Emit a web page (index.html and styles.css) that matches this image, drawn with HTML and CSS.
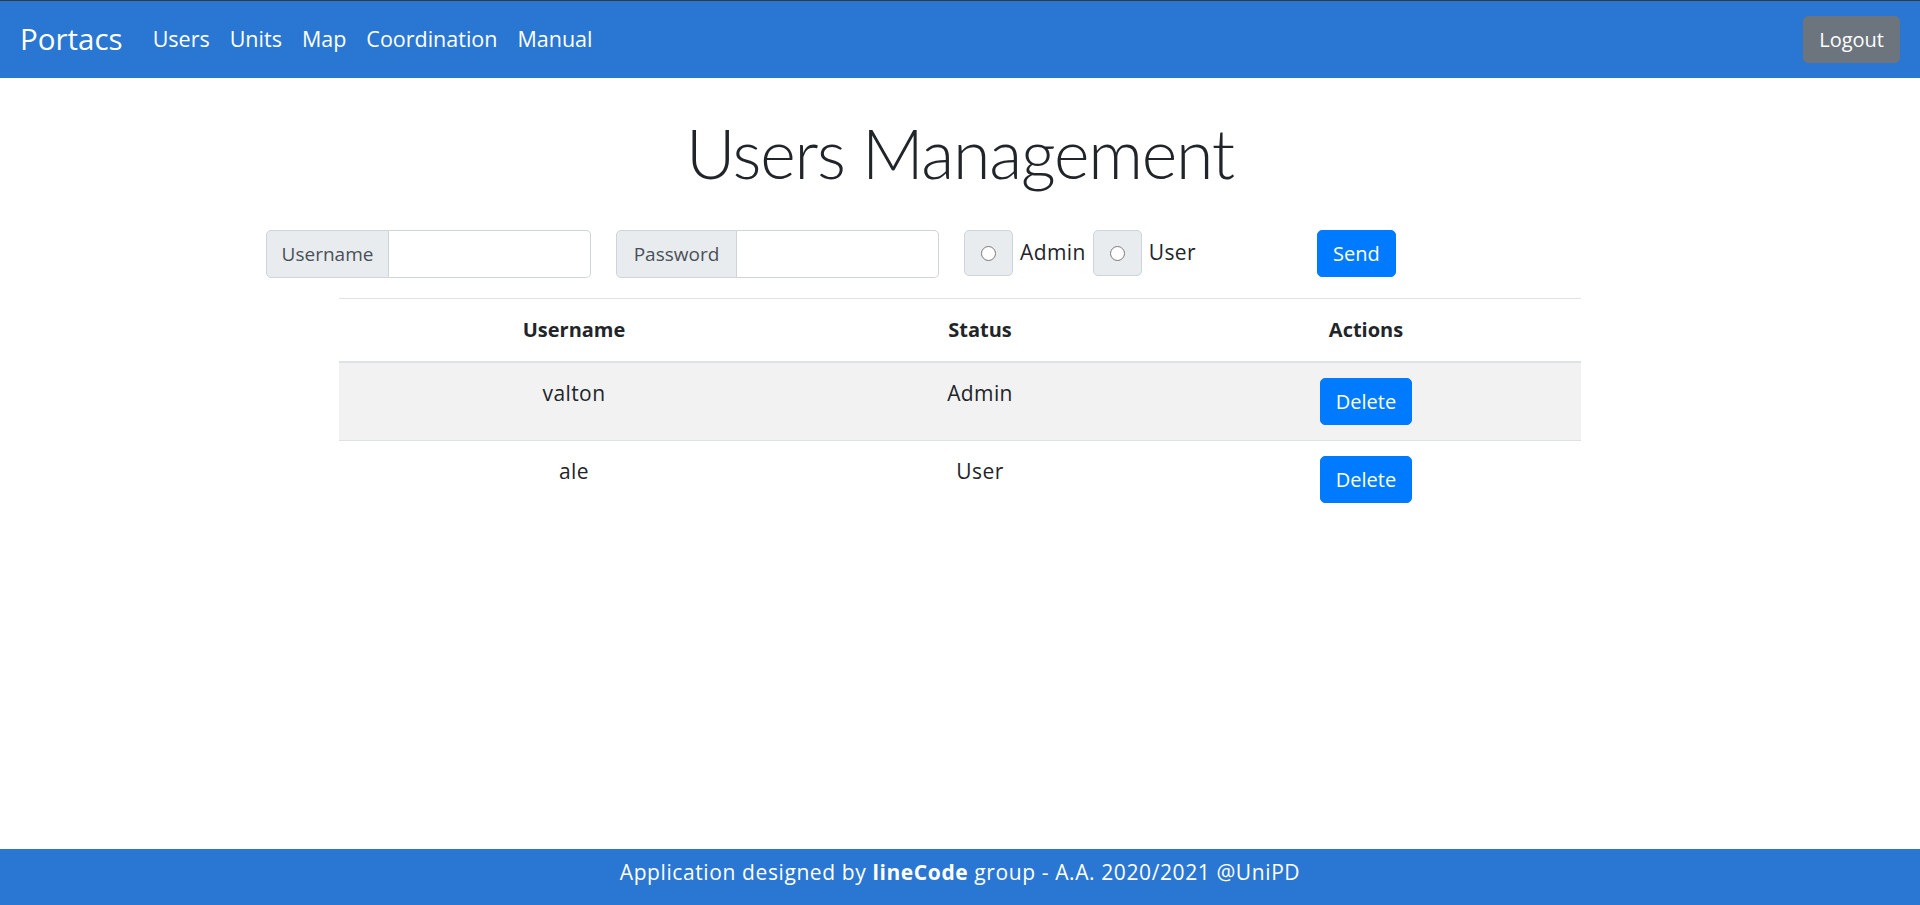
FILE: index.html
```html
<!DOCTYPE html>
<html lang="en">
<head>
<meta charset="utf-8">
<title>Portacs - Users</title>
<link rel="stylesheet" href="styles.css">
</head>
<body>
<nav class="navbar">
  <a class="brand" href="#">Portacs</a>
  <div class="nav">
    <a class="nav-link" href="#">Users</a>
    <a class="nav-link" href="#">Units</a>
    <a class="nav-link" href="#">Map</a>
    <a class="nav-link" href="#">Coordination</a>
    <a class="nav-link" href="#">Manual</a>
  </div>
  <button class="btn btn-secondary logout">Logout</button>
</nav>
<main class="main">
  <h1 class="title">Users Management</h1>
  <form class="user-form">
    <div class="input-group">
      <span class="ig-text ig-user">Username</span>
      <input class="ig-input" type="text">
    </div>
    <div class="input-group gap-left">
      <span class="ig-text ig-pass">Password</span>
      <input class="ig-input" type="password">
    </div>
    <div class="radio-group gap-left">
      <span class="radio-box"><input type="radio" name="role" class="radio"></span>
      <span class="radio-label">Admin</span>
      <span class="radio-box"><input type="radio" name="role" class="radio"></span>
      <span class="radio-label">User</span>
    </div>
    <button class="btn btn-primary send" type="button">Send</button>
  </form>
  <table class="users-table">
    <thead>
      <tr>
        <th class="col-user">Username</th>
        <th class="col-status">Status</th>
        <th class="col-actions">Actions</th>
      </tr>
    </thead>
    <tbody>
      <tr class="striped">
        <td>valton</td>
        <td>Admin</td>
        <td><button class="btn btn-primary" type="button">Delete</button></td>
      </tr>
      <tr>
        <td>ale</td>
        <td>User</td>
        <td><button class="btn btn-primary" type="button">Delete</button></td>
      </tr>
    </tbody>
  </table>
</main>
<footer class="footer">
  Application designed by <strong>lineCode</strong> group - A.A. 2020/2021 @UniPD
</footer>
</body>
</html>
```

FILE: styles.css
```css
* { box-sizing: border-box; }
html, body { margin: 0; padding: 0; }
body {
  font-family: "Open Sans", Lato, sans-serif;
  font-size: 20px;
  line-height: 1.5;
  color: #212529;
  background: #fff;
  min-height: 905px;
  display: flex;
  flex-direction: column;
}
a { text-decoration: none; }

.navbar {
  height: 78px;
  border-top: 1px solid #343a40;
  background: #2a76d3;
  display: flex;
  align-items: center;
  padding: 0 20px;
}
.brand {
  font-size: 29.5px;
  color: #fff;
  margin-right: 20px;
  line-height: 1.5;
}
.nav { display: flex; }
.nav-link {
  color: #fff;
  padding: 0 10px;
  font-size: 21.5px;
}

.btn {
  font-family: inherit;
  font-size: 20px;
  line-height: 30px;
  padding: 7.5px 15px;
  border-radius: 5px;
  border: 1px solid transparent;
  color: #fff;
  cursor: pointer;
}
.btn-primary { background: #007bff; border-color: #007bff; }
.btn-secondary { background: #6c757d; border-color: #6c757d; }
.logout { margin-left: auto; }

.main { flex: 1; }
.title {
  font-family: Lato, "Open Sans", sans-serif;
  font-size: 68px;
  font-weight: 300;
  letter-spacing: -1.2px;
  line-height: 84px;
  text-align: center;
  margin: 33px 0 35px;
}

.user-form {
  display: flex;
  align-items: flex-start;
  margin-left: 266px;
  height: 48px;
}
.input-group { display: flex; height: 48px; }
.gap-left { margin-left: 25px; }
.ig-text {
  background: #e9ecef;
  border: 1px solid #ced4da;
  border-radius: 5px 0 0 5px;
  padding: 7.5px 0;
  text-align: center;
  color: #495057;
  line-height: 30px;
  font-size: 19px;
}
.ig-user { width: 123px; }
.ig-pass { width: 121px; }
.ig-input {
  width: 202px;
  height: 48px;
  border: 1px solid #ced4da;
  border-left: 0;
  border-radius: 0 5px 5px 0;
  font-size: 20px;
  padding: 0 15px;
}
.radio-group { display: flex; align-items: center; height: 46px; }
.radio-box {
  width: 49px;
  height: 46px;
  background: #e9ecef;
  border: 1px solid #ced4da;
  border-radius: 5px;
  display: flex;
  align-items: center;
  justify-content: center;
}
.radio { width: 15px; height: 15px; margin: 0; }
.radio-label { margin: 0 7px; font-size: 21px; letter-spacing: 0.4px; }
.send { margin-left: 114px; }

.users-table {
  width: 1242px;
  margin: 20px auto 0;
  border-collapse: collapse;
}
.users-table th, .users-table td {
  padding: 15px;
  text-align: center;
  vertical-align: top;
  border-top: 1px solid #dee2e6;
  line-height: 30px;
}
.users-table td { font-size: 21px; letter-spacing: 0.4px; }
.users-table td .btn { letter-spacing: 0; }
.users-table th {
  font-weight: 700;
  padding: 16px 15px;
  border-bottom: 2px solid #dee2e6;
}
.col-user { width: 470px; }
.col-status { width: 342px; }
.col-actions { width: 430px; }
.striped { background: #f2f2f2; }

.footer {
  height: 56px;
  background: #2a76d3;
  color: #fff;
  text-align: center;
  padding-top: 8px;
  font-size: 21px;
  letter-spacing: 0.6px;
  line-height: 30px;
}
.footer strong { font-weight: 700; }
```
